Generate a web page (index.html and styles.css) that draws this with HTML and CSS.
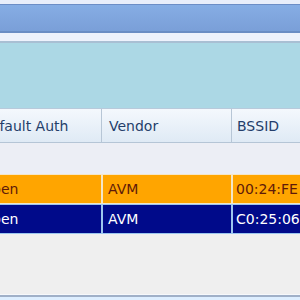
FILE: index.html
```html
<!DOCTYPE html>
<html>
<head>
<meta charset="utf-8">
<link rel="stylesheet" href="styles.css">
</head>
<body>
<div class="app">
  <div class="topstrip"></div>
  <div class="titlebar"></div>
  <div class="lightstrip"></div>
  <div class="panel"></div>
  <div class="grid">
    <div class="row head">
      <div class="cell c1">Default Auth</div>
      <div class="cell c2">Vendor</div>
      <div class="cell c3">BSSID</div>
    </div>
    <div class="row empty"></div>
    <div class="row data orange">
      <div class="cell c1">Open</div>
      <div class="cell c2">AVM</div>
      <div class="cell c3">00:24:FE</div>
    </div>
    <div class="row data navy">
      <div class="cell c1">Open</div>
      <div class="cell c2">AVM</div>
      <div class="cell c3">C0:25:06</div>
    </div>
  </div>
  <div class="fill"></div>
  <div class="bottom"></div>
</div>
</body>
</html>
```
FILE: styles.css
```css
html, body { margin: 0; padding: 0; }
body { width: 300px; height: 300px; overflow: hidden; background: #efefef; font-family: Tahoma, "DejaVu Sans", sans-serif; }
.app { display: flex; flex-direction: column; height: 300px; overflow: hidden; }
.topstrip { height: 4px; background: #e9eefa; border-bottom: 1px solid #6d8ec6; flex: none; }
.titlebar { height: 26px; background: linear-gradient(#86ade4, #7a9fd8); border-bottom: 2px solid #6b8dc4; flex: none; }
.lightstrip { height: 8px; background: #eef2fc; border-bottom: 2px solid #a9bfd3; flex: none; }
.panel { height: 65px; background: #acd8e5; flex: none; }
.grid { margin-left: -50px; width: 400px; flex: none; }
.row { display: flex; }
.cell { flex: none; box-sizing: border-box; overflow: hidden; white-space: nowrap; font-size: 14px; display: flex; align-items: center; }
.c1 { width: 152px; }
.c2 { width: 130px; }
.c3 { width: 110px; }
.head { height: 33px; background: linear-gradient(#f4f8fd, #dfeaf5); border-top: 1px solid #b8cadb; border-bottom: 1px solid #b5c5d6; }
.head .cell { color: #243e6a; border-right: 1px solid #b7c6d6; }
.head .c1 { padding-left: 30px; }
.head .c2 { padding-left: 7px; }
.head .c3 { padding-left: 5px; }
.empty { height: 31px; background: #eceef5; }
.data { height: 30px; }
.data .cell { border: 1px solid #e9ecf3; }
.data .c1 { padding-left: 30px; }
.data .c2 { padding-left: 5px; }
.data .c3 { padding-left: 3px; }
.orange .cell { background: #ffa500; color: #5e1a0a; border-color: #f4e6c8; }
.navy .cell { background: #000a8a; color: #ffffff; border-color: #9cc6ee; }
.fill { flex: 1; background: #efefef; }
.bottom { height: 5px; background: #ddeeff; border-top: 1px solid #f6f8fb; box-shadow: inset 0 2px 0 #a0b0c8; flex: none; }
```
